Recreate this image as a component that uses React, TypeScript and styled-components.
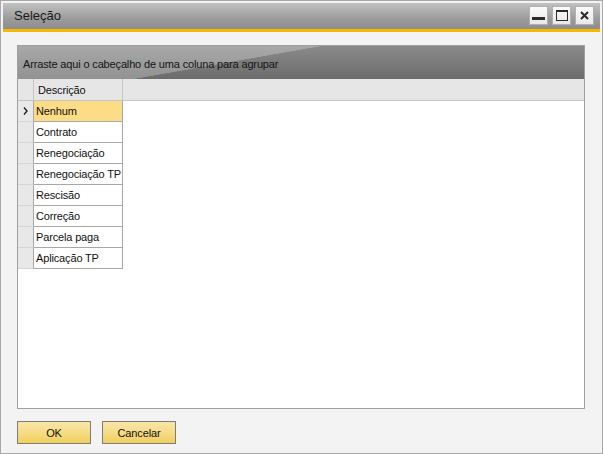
import React from "react";
import styled, { createGlobalStyle } from "styled-components";

const Global = createGlobalStyle`
  html, body {
    margin: 0;
    padding: 0;
    background: #ffffff;
  }
  * {
    box-sizing: border-box;
  }
`;

const Window = styled.div`
  width: 603px;
  height: 454px;
  border: 1px solid #a8a8a8;
  padding: 2px;
  background: #f3f3f3;
  display: flex;
  flex-direction: column;
  font-family: "Liberation Sans", Arial, sans-serif;
  font-size: 11px;
  letter-spacing: -0.15px;
  color: #111;
`;

const TitleBar = styled.div`
  height: 29px;
  border-bottom: 3px solid #f7b900;
  background: linear-gradient(#c2c2c2, #9b9b9b 60%, #8e8e8e);
  display: flex;
  align-items: center;
  padding: 0 6px 0 11px;
`;

const Title = styled.div`
  flex: 1;
  font-size: 13px;
  letter-spacing: 0;
  color: #1a1a1a;
  padding-bottom: 2px;
`;

const Controls = styled.div`
  display: flex;
  gap: 4px;
  padding-bottom: 2px;
`;

const CtrlButton = styled.div`
  width: 19px;
  height: 19px;
  border: 1px solid #b0b0b0;
  background: linear-gradient(#fbfbfb, #e8e8e8);
  display: flex;
  align-items: center;
  justify-content: center;
`;

const Body = styled.div`
  flex: 1;
  display: flex;
  flex-direction: column;
  padding: 13px 15px 7px 14px;
  gap: 12px;
`;

const Grid = styled.div`
  flex: 1;
  border: 1px solid #9f9f9f;
  background: #ffffff;
  display: flex;
  flex-direction: column;
`;

const GroupPanel = styled.div`
  height: 33px;
  background:
    linear-gradient(170deg, rgba(255, 255, 255, 0.26) 0 40%, rgba(255, 255, 255, 0) 40.5%),
    linear-gradient(#8a8a8a, #6c6c6c);
  display: flex;
  align-items: center;
  padding: 2px 0 0 5px;
  color: #141414;
`;

const HeaderRow = styled.div`
  height: 22px;
  display: flex;
  background: #e6e6e6;
  border-bottom: 1px solid #c4c4c4;
`;

const HeaderIndicator = styled.div`
  width: 16px;
  border-right: 1px solid #c4c4c4;
`;

const HeaderCell = styled.div`
  width: 89px;
  border-right: 1px solid #c4c4c4;
  display: flex;
  align-items: center;
  padding-left: 4px;
`;

const Rows = styled.div`
  display: flex;
  flex-direction: column;
`;

const Row = styled.div`
  height: 21px;
  display: flex;
`;

const Indicator = styled.div`
  width: 16px;
  background: #e8e8e8;
  border-right: 1px solid #a8a8a8;
  border-bottom: 1px solid #d6d6d6;
  display: flex;
  align-items: center;
  justify-content: center;
`;

const Cell = styled.div<{ $selected?: boolean }>`
  width: 89px;
  background: ${(p) => (p.$selected ? "#fcdc86" : "#ffffff")};
  border-right: 1px solid #a8a8a8;
  border-bottom: 1px solid #a8a8a8;
  display: flex;
  align-items: center;
  padding-left: 2px;
  white-space: nowrap;
  overflow: hidden;
`;

const Footer = styled.div`
  height: 23px;
  display: flex;
  gap: 11px;
`;

const Button = styled.div`
  width: 74px;
  height: 23px;
  border: 1px solid #7c7c7c;
  background: linear-gradient(#f9e6a8, #f5dc86 50%, #f1cf5c);
  display: flex;
  align-items: center;
  justify-content: center;
  color: #111;
`;

const items = [
  "Nenhum",
  "Contrato",
  "Renegociação",
  "Renegociação TP",
  "Rescisão",
  "Correção",
  "Parcela paga",
  "Aplicação TP",
];

export default function App() {
  return (
    <>
      <Global />
      <Window>
        <TitleBar>
          <Title>Seleção</Title>
          <Controls>
            <CtrlButton>
              <svg width="13" height="13" viewBox="0 0 13 13">
                <rect x="0" y="8" width="13" height="3" fill="#2a2a2a" />
              </svg>
            </CtrlButton>
            <CtrlButton>
              <svg width="12" height="11" viewBox="0 0 12 11">
                <rect x="0.5" y="0.5" width="11" height="10" fill="none" stroke="#2a2a2a" />
                <rect x="0" y="0" width="12" height="2" fill="#2a2a2a" />
              </svg>
            </CtrlButton>
            <CtrlButton>
              <svg width="9" height="9" viewBox="0 0 9 9">
                <path d="M1 1 L8 8 M8 1 L1 8" stroke="#2a2a2a" strokeWidth="2" />
              </svg>
            </CtrlButton>
          </Controls>
        </TitleBar>
        <Body>
          <Grid>
            <GroupPanel>Arraste aqui o cabeçalho de uma coluna para agrupar</GroupPanel>
            <HeaderRow>
              <HeaderIndicator />
              <HeaderCell>Descrição</HeaderCell>
            </HeaderRow>
            <Rows>
              {items.map((item, i) => (
                <Row key={item}>
                  <Indicator>
                    {i === 0 && (
                      <svg width="5" height="8" viewBox="0 0 5 8">
                        <path d="M1 0.5 L4 4 L1 7.5" fill="none" stroke="#222" strokeWidth="1.4" />
                      </svg>
                    )}
                  </Indicator>
                  <Cell $selected={i === 0}>{item}</Cell>
                </Row>
              ))}
            </Rows>
          </Grid>
          <Footer>
            <Button>OK</Button>
            <Button>Cancelar</Button>
          </Footer>
        </Body>
      </Window>
    </>
  );
}
